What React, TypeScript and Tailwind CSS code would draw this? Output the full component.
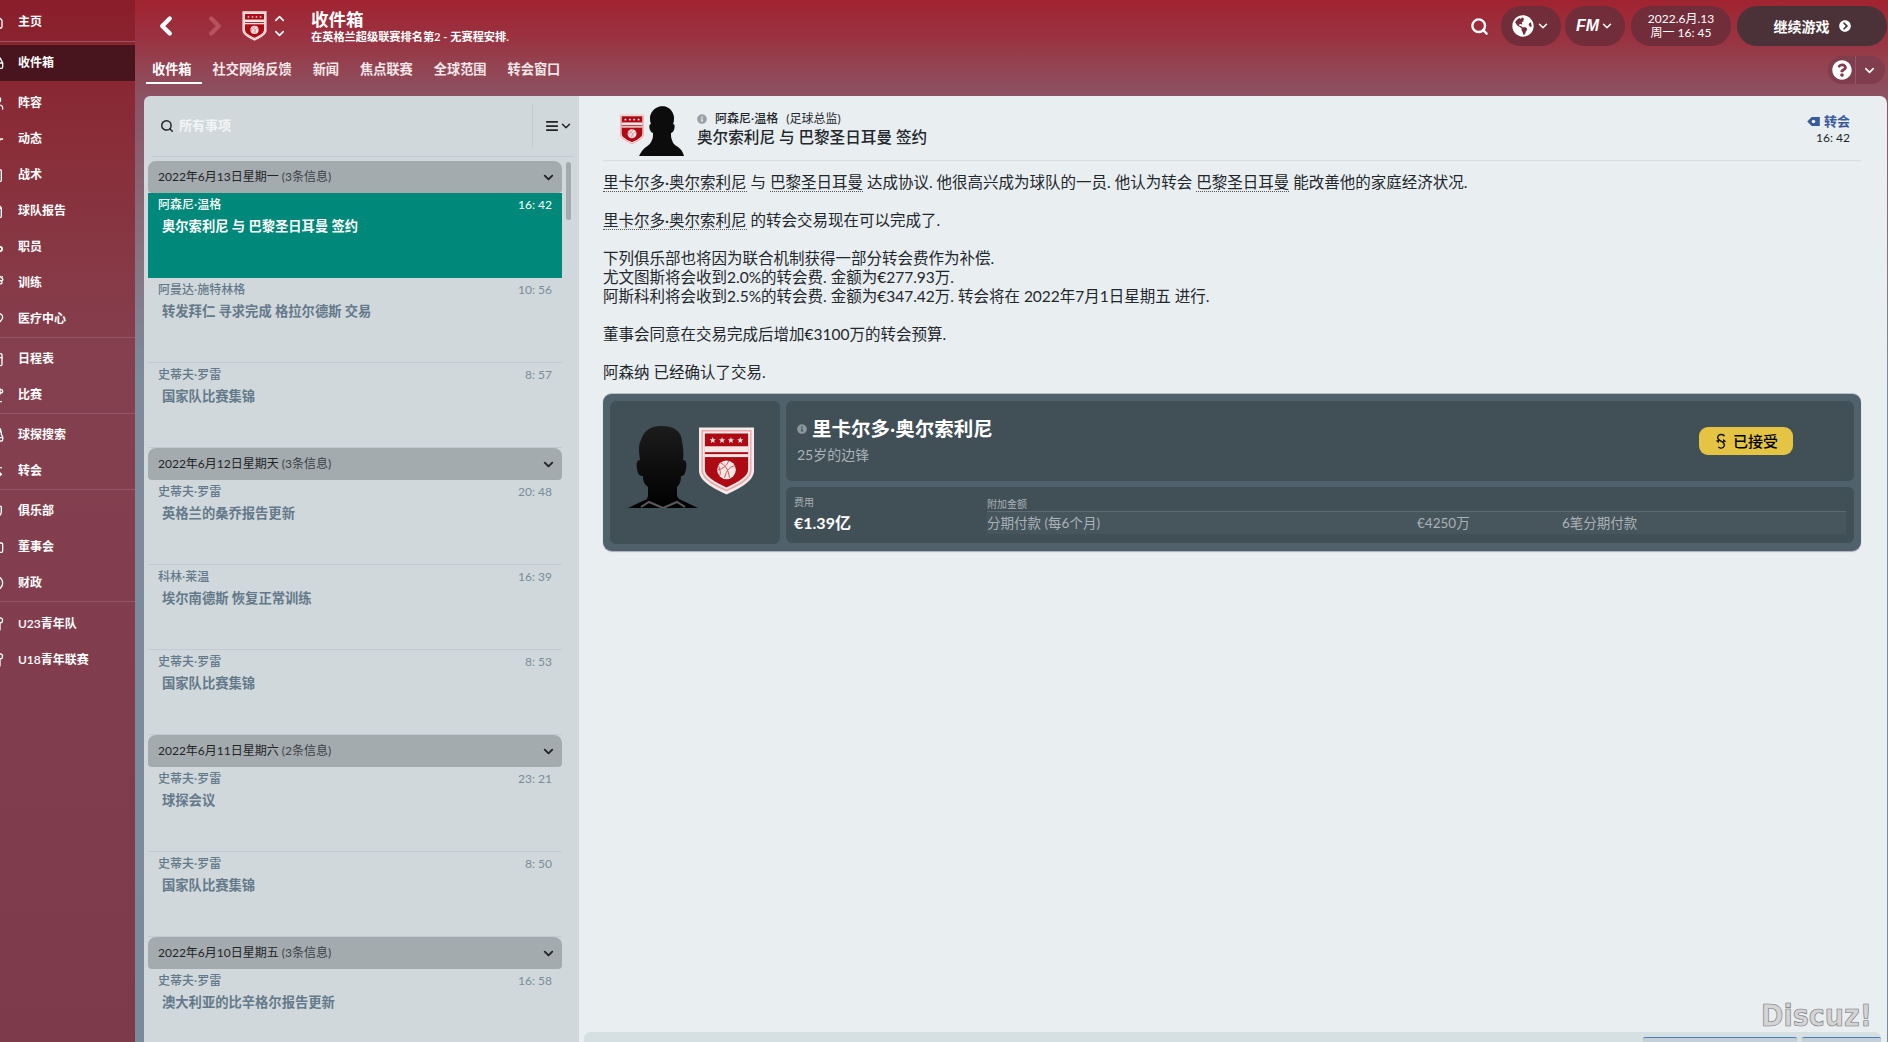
import {
  Search,
  ChevronLeft,
  ChevronRight,
  ChevronUp,
  ChevronDown,
  AlignJustify,
  Home,
  Inbox,
  Users,
  Activity,
  ClipboardList,
  FileText,
  UserCog,
  Dumbbell,
  Heart,
  Calendar,
  Trophy,
  Binoculars,
  ArrowLeftRight,
  Shield,
  Briefcase,
  CircleDollarSign,
  Shirt,
} from "lucide-react";
import { FaGlobeAmericas, FaQuestionCircle, FaChevronCircleRight, FaInfoCircle } from "react-icons/fa";
import type { ComponentType } from "react";

type NavItem = { label: string; icon: ComponentType<{ size?: number; className?: string }>; active?: boolean };

const NAV_GROUPS: { items: NavItem[]; className: string }[] = [
  { items: [{ label: "主页", icon: Home }], className: "pt-[4px] pb-[1px] border-b border-[#95566a]" },
  { items: [{ label: "收件箱", icon: Inbox, active: true }], className: "pt-[3px] pb-[4px]" },
  {
    items: [
      { label: "阵容", icon: Users },
      { label: "动态", icon: Activity },
      { label: "战术", icon: ClipboardList },
      { label: "球队报告", icon: FileText },
      { label: "职员", icon: UserCog },
      { label: "训练", icon: Dumbbell },
      { label: "医疗中心", icon: Heart },
    ],
    className: "border-b border-[#95566a]",
  },
  {
    items: [
      { label: "日程表", icon: Calendar },
      { label: "比赛", icon: Trophy },
    ],
    className: "pt-[3px] border-b border-[#95566a]",
  },
  {
    items: [
      { label: "球探搜索", icon: Binoculars },
      { label: "转会", icon: ArrowLeftRight },
    ],
    className: "pt-[3px] border-b border-[#95566a]",
  },
  {
    items: [
      { label: "俱乐部", icon: Shield },
      { label: "董事会", icon: Briefcase },
      { label: "财政", icon: CircleDollarSign },
    ],
    className: "pt-[3px] border-b border-[#95566a]",
  },
  {
    items: [
      { label: "U23青年队", icon: Shirt },
      { label: "U18青年联赛", icon: Shirt },
    ],
    className: "pt-[4px]",
  },
];

const TABS = ["收件箱", "社交网络反馈", "新闻", "焦点联赛", "全球范围", "转会窗口"];

type Message = { from: string; time: string; subject: string; selected?: boolean };

const MESSAGE_GROUPS: { date: string; count: string; messages: Message[] }[] = [
  {
    date: "2022年6月13日星期一",
    count: "(3条信息)",
    messages: [
      { from: "阿森尼·温格", time: "16: 42", subject: "奥尔索利尼 与 巴黎圣日耳曼 签约", selected: true },
      { from: "阿曼达·施特林格", time: "10: 56", subject: "转发拜仁 寻求完成 格拉尔德斯 交易" },
      { from: "史蒂夫·罗雷", time: "8: 57", subject: "国家队比赛集锦" },
    ],
  },
  {
    date: "2022年6月12日星期天",
    count: "(3条信息)",
    messages: [
      { from: "史蒂夫·罗雷", time: "20: 48", subject: "英格兰的桑乔报告更新" },
      { from: "科林·莱温", time: "16: 39", subject: "埃尔南德斯 恢复正常训练" },
      { from: "史蒂夫·罗雷", time: "8: 53", subject: "国家队比赛集锦" },
    ],
  },
  {
    date: "2022年6月11日星期六",
    count: "(2条信息)",
    messages: [
      { from: "史蒂夫·罗雷", time: "23: 21", subject: "球探会议" },
      { from: "史蒂夫·罗雷", time: "8: 50", subject: "国家队比赛集锦" },
    ],
  },
  {
    date: "2022年6月10日星期五",
    count: "(3条信息)",
    messages: [{ from: "史蒂夫·罗雷", time: "16: 58", subject: "澳大利亚的比辛格尔报告更新" }],
  },
];

const STAR = "M0-3.400.800-1.100 3.200-1 1.300.400 2 2.700 0 1.400-2 2.700-1.300.400-3.200-1-.800-1.100z";

function Crest({ className }: { className?: string }) {
  return (
    <svg viewBox="0 0 58 70" className={className}>
      <path d="M1 1h56v44c0 10-14 18-28 24C15 63 1 55 1 45z" fill="#f4eaea" />
      <path d="M3.500 3.500h51v41c0 9-13 16-25.500 21.500C16.500 60.500 3.500 53.500 3.500 44.500z" fill="#e9a9ab" />
      <path d="M5 5h48v39c0 8-12 15-24 20C17 59 5 52 5 44z" fill="#f4eaea" />
      <path d="M7 7h44v37c0 7-11 13-22 18C18 57 7 51 7 44z" fill="#ad0a14" />
      <g fill="#f6e6e6">
        <path d={STAR} transform="translate(15 14)" />
        <path d={STAR} transform="translate(24.500 14)" />
        <path d={STAR} transform="translate(33.500 14)" />
        <path d={STAR} transform="translate(43 14)" />
        <rect x="7" y="20" width="44" height="6" />
        <rect x="7" y="28" width="44" height="3" />
      </g>
      <circle cx="29" cy="44" r="9.500" fill="#f6e6e6" />
      <path
        d="M23 37c4 2 8 6 9 15M31 35c-1 4-5 8-11 9M38 40c-5 0-9 4-11 12M21 40c2 5 2 8 1 10"
        fill="none"
        stroke="#c9555c"
        strokeWidth="1"
      />
    </svg>
  );
}

// player portrait placeholder, big head and hardly any shoulders
function CardSilhouette({ className }: { className?: string }) {
  return (
    <svg viewBox="0 0 70 82" className={className}>
      <defs>
        <linearGradient id="cardHead" x1="0" y1="0" x2="0" y2="1">
          <stop offset="0" stopColor="#1c1c1c" />
          <stop offset="1" stopColor="#000" />
        </linearGradient>
      </defs>
      <path
        d="M33 0c12 0 20 4 21 15 1 6 2 12 1 19 3 0 4 3 3 9-1 5-2 7-5 7 0 5-1 8-4 11v9l2 3 19 9H0l19-9 1-3v-9c-4-3-5-6-5-11-4 0-5-2-6-7-1-6 0-9 3-9-1-8-2-14 1-20C16 5 22 0 33 0z"
        fill="url(#cardHead)"
      />
      <path d="M13 81l8-5 14 6 14-6 8 5" fill="none" stroke="#5a5a5a" strokeWidth="2" />
    </svg>
  );
}

function StaffSilhouette({ className }: { className?: string }) {
  return (
    <svg viewBox="0 0 45 50" className={className}>
      <path
        d="M23 0c7 0 11 5 12 11 0 3 0 5-1 7 2 0 2 3 1 6-1 2-2 3-3 3 0 3 0 5 1 7 1 4 3 5 6 7 3 2 5 5 6 9H0c2-4 4-7 7-9 3-2 5-4 6-7 1-2 1-4 1-7-1 0-2-1-3-3-1-3-1-6 1-6-1-2-1-4-1-7 1-6 6-11 13-11z"
        fill="#0c0c0c"
      />
    </svg>
  );
}

function Sidebar() {
  return (
    <aside className="w-[135px] shrink-0 overflow-hidden bg-gradient-to-b from-[#8a1e2a] via-[#85404f] via-35% to-[#7c3a4b] text-[12px] font-semibold text-white">
      {NAV_GROUPS.map((group, i) => (
        <div key={i} className={group.className}>
          {group.items.map((item) => (
            <div
              key={item.label}
              className={`flex h-9 items-center gap-[14px] ${item.active ? "bg-[#48141d]" : ""}`}
            >
              <item.icon size={16} className="ml-[-12px] shrink-0" />
              <span>{item.label}</span>
            </div>
          ))}
        </div>
      ))}
    </aside>
  );
}

function Header() {
  return (
    <header className="h-[96px] shrink-0 bg-gradient-to-b from-[#a12330] via-[#9a3241] via-40% to-[#8b5263] text-white">
      <div className="flex h-[52px] items-center">
        <ChevronLeft size={30} strokeWidth={3.5} className="ml-[16px] shrink-0" />
        <ChevronRight size={30} strokeWidth={3.5} className="ml-[19px] shrink-0 text-[#b5525c]" />
        <Crest className="ml-[12px] h-[32px] w-[25px] shrink-0" />
        <div className="ml-[5px] flex flex-col items-center">
          <ChevronUp size={15} strokeWidth={2.5} />
          <ChevronDown size={15} strokeWidth={2.5} />
        </div>
        <div className="ml-[24px] flex flex-col">
          <span className="text-[17.5px] font-semibold leading-[21px]">收件箱</span>
          <span className="text-[11.2px] font-semibold leading-[13px]">在英格兰超级联赛排名第2 - 无赛程安排.</span>
        </div>
        <div className="ml-auto flex items-center">
          <Search size={19} strokeWidth={3} className="mr-[12px]" />
          <div className="mr-[4px] flex h-10 w-[60px] items-center justify-center gap-[2px] rounded-full bg-[#712d39]">
            <FaGlobeAmericas size={22} />
            <ChevronDown size={14} strokeWidth={2.5} />
          </div>
          <div className="mr-[6px] flex h-10 w-[60px] items-center justify-center gap-[1px] rounded-full bg-[#712d39]">
            <span className="font-['Liberation_Sans',sans-serif] text-[16px] font-bold italic">FM</span>
            <ChevronDown size={14} strokeWidth={2.5} />
          </div>
          <div className="mr-[6px] flex h-10 w-[100px] flex-col items-center justify-center rounded-full bg-[#712d39] text-[12px] leading-[14px]">
            <span>2022.6月.13</span>
            <span>周一 16: 45</span>
          </div>
          <div className="mr-[1px] flex h-10 w-[150px] items-center justify-center gap-[9px] rounded-full bg-[#4b3239] text-[14px] font-semibold">
            <span>继续游戏</span>
            <FaChevronCircleRight size={12} />
          </div>
        </div>
      </div>
      <div className="flex h-[32px] items-end">
        <nav className="ml-[11px] flex gap-[1px] text-[13.2px] font-semibold">
          {TABS.map((tab, i) => (
            <div
              key={tab}
              className={`h-[32px] pr-[10px] pt-[8px] ${i === 0 ? "border-b-2 border-white pl-[6px]" : "pl-[10px] text-[#f3e7e9]"}`}
            >
              {tab}
            </div>
          ))}
        </nav>
        <div className="ml-auto mr-[3px] flex h-[28px] w-[57px] items-center rounded-full bg-[#7f3d4d]">
          <div className="flex h-full w-[28px] items-center justify-end border-r border-[#95566a] pr-[3px]">
            <FaQuestionCircle size={20} />
          </div>
          <ChevronDown size={15} strokeWidth={2.5} className="ml-[6px]" />
        </div>
      </div>
    </header>
  );
}

function MessageList() {
  return (
    <section className="relative flex w-[435px] shrink-0 flex-col overflow-hidden rounded-tl-[6px] bg-[#d0d8db]">
      <div className="ml-[8px] mr-[6px] flex h-[61px] shrink-0 items-center border-b border-[#c2cbcf]">
        <Search size={14} strokeWidth={2.5} className="ml-[8px] text-[#222]" />
        <span className="ml-[5px] text-[13px] font-semibold text-[#f2f5f6]">所有事项</span>
        <div className="ml-auto flex h-[44px] items-center border-l border-[#c2cbcf] pl-[12px]">
          <AlignJustify size={14} strokeWidth={3} className="text-[#222]" />
          <ChevronDown size={14} strokeWidth={2.5} className="text-[#222]" />
        </div>
      </div>
      <div className="ml-[4px] mt-[4px] w-[414px]">
        {MESSAGE_GROUPS.map((group) => (
          <div key={group.date}>
            <div className="flex h-[32px] items-center justify-between rounded-t-[8px] rounded-b-[4px] bg-[#a4abae] pl-[10px] pr-[6px] text-[12px] text-[#1f2427]">
              <span>
                {group.date} <span className="text-[#3a4145]">{group.count}</span>
              </span>
              <ChevronDown size={15} strokeWidth={3} />
            </div>
            {group.messages.map((message) => (
              <div
                key={message.from + message.time}
                className={`h-[85px] border-b px-[10px] pt-[4px] ${
                  message.selected ? "border-[#00897a] bg-[#00897a] text-white" : "border-[#c2cbcf] text-[#64798a]"
                }`}
              >
                <div className="flex items-center justify-between text-[12px] leading-[16px]">
                  <span className="font-medium">{message.from}</span>
                  <span className={message.selected ? "" : "text-[#7a8c9a]"}>{message.time}</span>
                </div>
                <p className="ml-[4px] mt-[3px] text-[13.3px] font-semibold leading-[20px]">{message.subject}</p>
              </div>
            ))}
          </div>
        ))}
      </div>
      <div className="absolute left-[422px] top-[66px] h-[58px] w-[5px] rounded-full bg-[#a4abae]" />
    </section>
  );
}

function Linked({ children }: { children: string }) {
  return <span className="border-b border-dotted border-[#555]">{children}</span>;
}

function AcceptIcon() {
  return (
    <svg viewBox="0 0 16 20" className="h-[19px] w-[14px]" fill="none" stroke="#111" strokeWidth="1.6">
      <path d="M12 4C11 1.500 6 1 4.500 4c-1 2 .5 4 3.500 5.500 3 1.500 4.500 3.500 3.500 6-1 2.500-5 3-6.500 .5" />
      <path d="M2 9l4-1-.5 4zM14 10l-4 1 .5-4z" fill="#111" stroke="none" />
    </svg>
  );
}

function TagIcon() {
  return (
    <svg viewBox="0 0 14 10" className="h-[9px] w-[13px]">
      <path d="M5 0h9v10H5L0 5z" fill="#3b5a9c" />
      <circle cx="7" cy="5" r="2" fill="#eaeef1" />
    </svg>
  );
}

function TransferCard() {
  return (
    <div className="mt-[11px] flex h-[158px] gap-[6px] rounded-[9px] border-t border-[#b8c1c6] bg-[#4f626b] p-[7px] shadow-[0_1px_1px_#aab]">
      <div className="flex w-[170px] shrink-0 items-start rounded-[6px] bg-[#414f57] pl-[18px] pt-[25px]">
        <CardSilhouette className="h-[82px] w-[70px] shrink-0" />
        <Crest className="h-[70px] w-[57px] shrink-0" />
      </div>
      <div className="flex flex-1 flex-col gap-[6px]">
        <div className="flex h-[80px] items-start justify-between rounded-[6px] bg-[#414f57] pl-[11px] pr-[61px]">
          <div className="pt-[16px]">
            <div className="flex items-center gap-[5px] text-white">
              <FaInfoCircle size={10} className="text-[#8b979d]" />
              <span className="text-[19.5px] font-semibold leading-[24px]">里卡尔多·奥尔索利尼</span>
            </div>
            <p className="mt-[6px] text-[14px] leading-[16px] text-[#a9b2b6]">25岁的边锋</p>
          </div>
          <div className="mt-[26px] flex h-[28px] w-[94px] items-center justify-center gap-[5px] rounded-[9px] bg-[#e5c444] text-[15px] font-medium text-black">
            <AcceptIcon />
            <span>已接受</span>
          </div>
        </div>
        <div className="flex h-[56px] rounded-[6px] bg-[#414f57] pl-[8px] pr-[8px] text-[#a9b2b6]">
          <div className="w-[193px] shrink-0 pt-[8px]">
            <p className="text-[10px] leading-[14px]">费用</p>
            <p className="mt-[3px] text-[16px] font-bold leading-[22px] text-white">€1.39亿</p>
          </div>
          <div className="flex-1 pt-[10px]">
            <p className="text-[10px] leading-[14px]">附加金额</p>
            <div className="flex h-[23px] items-center border-t border-[#5d6a71] bg-[#47555d] text-[13.5px]">
              <span className="w-[430px]">分期付款 (每6个月)</span>
              <span className="w-[145px]">€4250万</span>
              <span>6笔分期付款</span>
            </div>
          </div>
        </div>
      </div>
    </div>
  );
}

function MessageDetail() {
  return (
    <section className="relative flex flex-1 flex-col overflow-hidden rounded-tr-[7px] bg-[#e9eef1] text-[#22272b]">
      <div className="ml-[24px] mr-[26px] flex h-[65px] shrink-0 items-start justify-between border-b border-[#d5dcdf]">
        <div className="flex">
          <div className="relative ml-[15px] mt-[10px] h-[50px] w-[66px] shrink-0">
            <Crest className="absolute left-0 top-[7px] z-10 h-[33px] w-[28px]" />
            <StaffSilhouette className="absolute left-[21px] top-0 h-[50px] w-[45px]" />
          </div>
          <div className="ml-[13px] pt-[14px]">
            <div className="flex items-center gap-[8px] text-[12px] leading-[18px]">
              <FaInfoCircle size={10} className="text-[#97a0a5]" />
              <span className="font-medium">阿森尼·温格</span>
              <span>(足球总监)</span>
            </div>
            <p className="-mt-[1px] text-[15.6px] font-medium leading-[20px]">奥尔索利尼 与 巴黎圣日耳曼 签约</p>
          </div>
        </div>
        <div className="flex flex-col items-end pr-[11px] pt-[16px]">
          <div className="flex items-center gap-[4px] text-[13px] font-semibold leading-[18px] text-[#3b5a9c]">
            <TagIcon />
            <span>转会</span>
          </div>
          <span className="text-[12px] leading-[15px]">16: 42</span>
        </div>
      </div>
      <div className="ml-[24px] mr-[26px] mt-[12px] flex-1">
        <div className="text-[15.5px] leading-[19px]">
          <p>
            <Linked>里卡尔多·奥尔索利尼</Linked> 与 <Linked>巴黎圣日耳曼</Linked> 达成协议. 他很高兴成为球队的一员. 他认为转会{" "}
            <Linked>巴黎圣日耳曼</Linked> 能改善他的家庭经济状况.
          </p>
          <p className="mt-[19px]">
            <Linked>里卡尔多·奥尔索利尼</Linked> 的转会交易现在可以完成了.
          </p>
          <p className="mt-[19px]">下列俱乐部也将因为联合机制获得一部分转会费作为补偿.</p>
          <p>尤文图斯将会收到2.0%的转会费. 金额为€277.93万.</p>
          <p>阿斯科利将会收到2.5%的转会费. 金额为€347.42万. 转会将在 2022年7月1日星期五 进行.</p>
          <p className="mt-[19px]">董事会同意在交易完成后增加€3100万的转会预算.</p>
          <p className="mt-[19px]">阿森纳 已经确认了交易.</p>
        </div>
        <TransferCard />
      </div>
      <div className="ml-[5px] mr-[6px] flex h-[10px] shrink-0 justify-end gap-[5px] rounded-t-[6px] bg-[#d6dfe2]">
        <div className="mt-[5px] w-[154px] rounded-t-[2px] border-t border-[#4a7db5] bg-[#c3d0da]" />
        <div className="mt-[5px] w-[79px] rounded-t-[2px] border-t border-[#4a7db5] bg-[#c3d0da]" />
      </div>
      <span className="absolute bottom-[11px] right-[15px] font-['DejaVu_Sans_Condensed','Liberation_Sans_Narrow',sans-serif] text-[30px] font-bold leading-[30px] text-[#d4d4d4] [-webkit-text-stroke:0.6px_#777]">
        Discuz!
      </span>
    </section>
  );
}

export default function App() {
  return (
    <div className="flex h-[1042px] w-[1888px] overflow-hidden bg-[#e9eef1] font-['Lato','Noto_Sans_CJK_SC',sans-serif]">
      <Sidebar />
      <main className="flex min-w-0 flex-1 flex-col">
        <Header />
        <div className="flex min-h-0 flex-1 bg-gradient-to-b from-[#8b5263] via-[#7d8c9a] via-30% to-[#7a8a98] pl-[9px] pr-[1px]">
          <MessageList />
          <MessageDetail />
        </div>
      </main>
    </div>
  );
}
